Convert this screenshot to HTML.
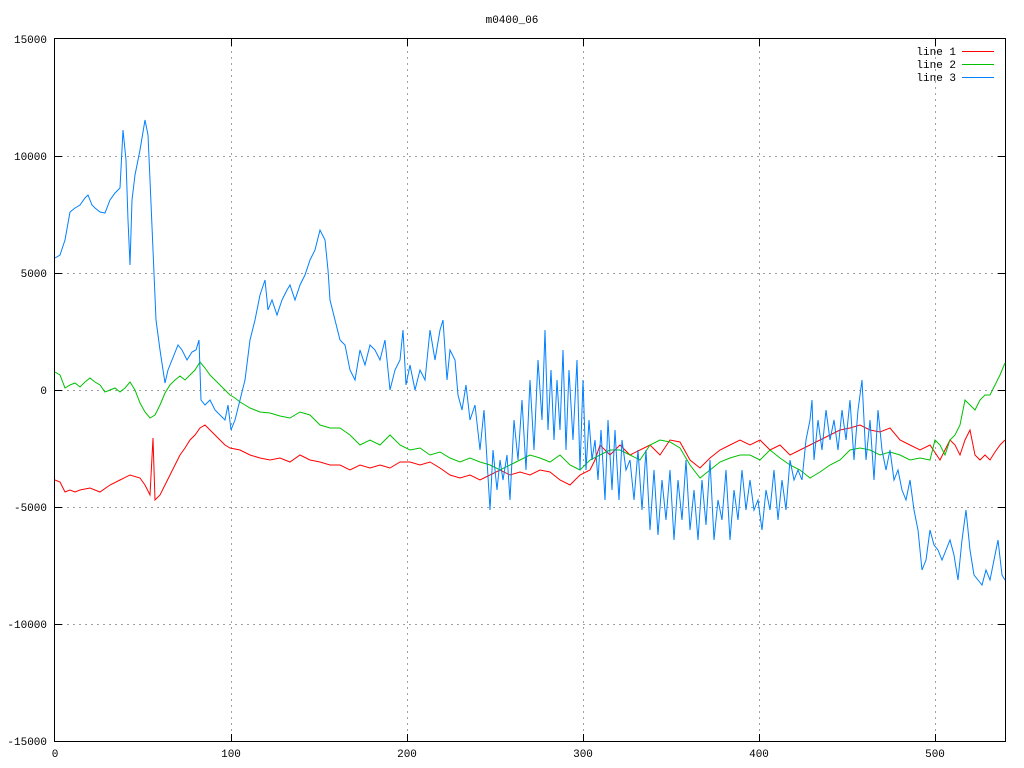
<!DOCTYPE html>
<html><head><meta charset="utf-8"><style>
html,body{margin:0;padding:0;background:#fff;}
svg{display:block;}
text{font-family:"Liberation Mono","DejaVu Sans Mono",monospace;font-size:11px;fill:#000;}
</style></head><body>
<svg width="1024" height="768" viewBox="0 0 1024 768" xmlns="http://www.w3.org/2000/svg">
<rect width="1024" height="768" fill="#fff"/>
<g stroke="#a0a0a0" stroke-width="1" stroke-dasharray="2,4" fill="none">
<line x1="55" y1="156.5" x2="1005" y2="156.5"/>
<line x1="55" y1="273.5" x2="1005" y2="273.5"/>
<line x1="55" y1="390.5" x2="1005" y2="390.5"/>
<line x1="55" y1="507.5" x2="1005" y2="507.5"/>
<line x1="55" y1="624.5" x2="1005" y2="624.5"/>
<line x1="231.5" y1="39" x2="231.5" y2="741"/>
<line x1="407.5" y1="39" x2="407.5" y2="741"/>
<line x1="583.5" y1="39" x2="583.5" y2="741"/>
<line x1="759.5" y1="39" x2="759.5" y2="741"/>
<line x1="935.5" y1="39" x2="935.5" y2="741"/>
</g>
<g stroke="#000" stroke-width="1">
<rect x="54.5" y="38.5" width="951" height="703" fill="none"/>
<path d="M55 156.5h7M55 273.5h7M55 390.5h7M55 507.5h7M55 624.5h7M1005 156.5h-7M1005 273.5h-7M1005 390.5h-7M1005 507.5h-7M1005 624.5h-7M231.5 39v7M407.5 39v7M583.5 39v7M759.5 39v7M935.5 39v7M231.5 741v-7M407.5 741v-7M583.5 741v-7M759.5 741v-7M935.5 741v-7"/>
</g>
<g text-anchor="end">
<text x="47" y="43">15000</text>
<text x="47" y="160">10000</text>
<text x="47" y="277">5000</text>
<text x="47" y="394">0</text>
<text x="47" y="511">-5000</text>
<text x="47" y="628">-10000</text>
<text x="47" y="745">-15000</text>
</g>
<g text-anchor="middle">
<text x="55" y="757">0</text>
<text x="231" y="757">100</text>
<text x="407" y="757">200</text>
<text x="583" y="757">300</text>
<text x="759" y="757">400</text>
<text x="935" y="757">500</text>
<text x="512" y="23">m0400_06</text>
</g>
<g text-anchor="end">
<text x="956" y="55">line 1</text>
<text x="956" y="68">line 2</text>
<text x="956" y="81">line 3</text>
</g>
<line x1="962" y1="51.5" x2="994" y2="51.5" stroke="#ff0000"/>
<line x1="962" y1="64.5" x2="994" y2="64.5" stroke="#00c000"/>
<line x1="962" y1="77.5" x2="994" y2="77.5" stroke="#0080ff"/>
<polyline fill="none" stroke="#ff0000" stroke-width="1" points="55,480 60,482 65,492 70,490 75,492 80,490 90,488 100,492 110,485 120,480 130,475 140,478 145,485 150,495 153,438 155,500 160,495 165,485 170,475 175,465 180,455 185,448 190,440 195,435 200,428 205,425 210,430 215,435 220,440 225,445 230,448 240,450 250,455 260,458 270,460 280,458 290,462 300,455 310,460 320,462 330,465 340,465 350,470 360,465 370,468 380,465 390,468 400,462 410,462 420,465 430,462 440,468 450,475 460,478 470,475 480,480 490,475 500,470 510,475 520,472 530,475 540,470 550,472 560,480 570,485 580,475 590,470 595,460 600,445 605,450 610,455 620,445 630,455 640,450 650,445 660,455 670,440 680,442 690,460 700,468 710,458 720,450 730,445 740,440 750,445 760,440 770,450 780,445 790,455 800,450 810,445 820,440 830,435 840,430 850,428 860,425 870,430 880,432 890,428 900,440 910,445 920,450 930,445 940,460 945,450 950,440 955,445 960,455 965,440 970,430 975,455 980,460 985,455 990,460 995,452 1000,445 1005,440"/>
<polyline fill="none" stroke="#00c000" stroke-width="1" points="55,372 60,375 65,388 70,385 75,383 80,387 85,382 90,378 95,382 100,385 105,392 110,390 115,388 120,392 125,388 130,382 135,390 140,403 145,412 150,418 155,415 160,405 165,393 170,385 175,380 180,376 185,380 190,375 195,370 200,362 205,368 210,375 215,380 220,385 225,390 230,395 235,398 240,402 245,405 250,408 255,410 260,412 270,413 280,416 290,418 300,412 310,415 320,425 330,428 340,428 350,435 360,445 370,440 380,445 390,435 400,445 410,450 420,448 430,455 440,452 450,458 460,462 470,458 480,462 490,465 500,470 510,465 520,460 530,455 540,458 550,462 560,455 570,465 580,470 590,460 600,455 610,450 620,450 630,455 640,460 650,445 660,440 670,442 680,448 690,465 700,478 710,470 720,462 730,458 740,455 750,455 760,460 770,450 780,458 790,465 800,470 810,478 820,472 830,465 840,460 850,450 860,448 870,450 880,455 890,452 900,455 910,460 920,458 930,460 935,440 940,445 945,455 950,440 955,435 960,425 965,400 970,405 975,410 980,400 985,395 990,395 995,385 1000,375 1005,363"/>
<polyline fill="none" stroke="#0080ff" stroke-width="1" points="55,258 60,255 65,240 70,212 75,208 80,205 85,198 88,195 92,205 95,208 100,212 105,213 110,200 115,193 120,188 123,130 126,160 128,220 130,265 132,200 135,175 140,150 145,120 148,135 150,180 153,250 156,320 160,350 163,370 165,383 168,370 172,360 178,345 182,350 187,360 192,352 196,350 199,340 201,400 205,405 210,400 215,410 220,415 225,420 228,405 231,430 235,420 240,400 245,380 250,340 255,320 260,295 265,280 268,310 272,300 277,315 282,300 287,290 290,285 295,300 300,285 305,275 310,260 315,250 320,230 325,240 328,270 330,300 335,320 340,340 345,345 350,370 355,380 360,350 365,365 370,345 375,350 380,360 385,340 390,390 395,370 400,360 403,330 406,385 410,365 415,390 420,370 425,380 430,330 435,360 440,330 443,320 447,380 450,350 455,360 458,395 462,410 466,385 470,420 475,405 480,450 484,410 487,460 490,510 493,450 497,490 500,460 503,480 507,455 510,500 514,420 518,460 522,400 526,470 530,380 534,450 538,360 542,420 545,330 548,430 551,370 554,440 557,380 560,430 563,350 566,450 569,370 573,440 577,360 580,470 583,380 586,470 589,420 592,460 595,440 598,480 601,430 605,500 608,420 612,490 615,430 619,500 622,440 626,470 630,460 634,500 638,450 642,510 646,450 650,530 654,470 658,535 662,480 666,520 670,470 674,540 678,480 682,520 686,460 690,530 694,490 698,540 702,480 706,525 710,460 714,540 718,500 722,520 726,470 730,540 734,490 738,520 742,470 746,510 750,480 754,510 758,500 762,530 766,490 770,510 774,470 778,520 782,480 786,510 790,460 794,480 798,470 802,480 806,440 810,420 812,400 814,460 818,420 822,450 826,410 830,440 834,420 838,450 842,410 846,440 850,400 854,460 858,410 862,380 864,420 866,460 870,420 874,480 878,410 882,450 886,470 890,450 894,480 898,470 902,490 906,500 910,480 914,510 918,530 922,570 926,560 930,530 934,545 938,550 942,560 946,550 950,540 954,555 958,580 962,540 966,510 970,550 974,575 978,580 982,585 986,570 990,580 994,560 998,540 1002,575 1005,580"/>
</svg>
</body></html>
